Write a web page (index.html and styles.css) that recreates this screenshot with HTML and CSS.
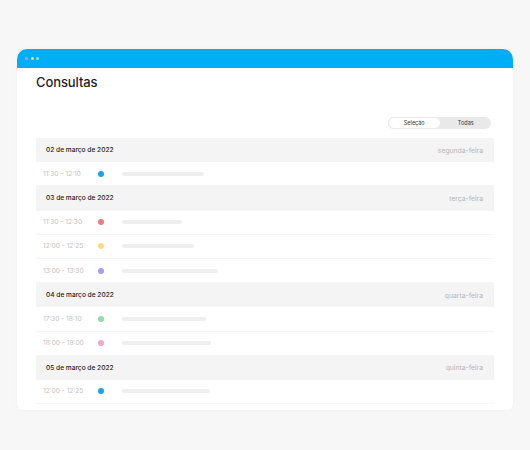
FILE: index.html
```html
<!DOCTYPE html>
<html lang="pt">
<head>
<meta charset="utf-8">
<link rel="stylesheet" href="styles.css">
</head>
<body>
<div class="window">
  <div class="titlebar">
    <span class="wdot d1"></span><span class="wdot d2"></span><span class="wdot d3"></span>
  </div>
  <div class="content">
    <h1 class="title">Consultas</h1>
    <div class="toolbar">
      <div class="toggle">
        <span class="opt active">Seleção</span>
        <span class="opt">Todas</span>
      </div>
    </div>
    <div class="table">
      <div class="day"><span class="date">02 de março de 2022</span><span class="weekday">segunda-feira</span></div>
      <div class="row"><span class="time">11:30 – 12:10</span><span class="dot blue"></span><span class="bar" style="width:82px"></span></div>

      <div class="day"><span class="date">03 de março de 2022</span><span class="weekday">terça-feira</span></div>
      <div class="row"><span class="time">11:30 - 12:30</span><span class="dot red"></span><span class="bar" style="width:60px"></span></div>
      <div class="row"><span class="time">12:00 - 12:25</span><span class="dot yellow"></span><span class="bar" style="width:72px"></span></div>
      <div class="row"><span class="time">13:00 - 13:30</span><span class="dot purple"></span><span class="bar" style="width:96px"></span></div>

      <div class="day"><span class="date">04 de março de 2022</span><span class="weekday">quarta-feira</span></div>
      <div class="row"><span class="time">17:30 - 18:10</span><span class="dot green"></span><span class="bar" style="width:84px"></span></div>
      <div class="row"><span class="time">18:00 - 19:00</span><span class="dot pink"></span><span class="bar" style="width:89px"></span></div>

      <div class="day"><span class="date">05 de março de 2022</span><span class="weekday">quinta-feira</span></div>
      <div class="row last"><span class="time">12:00 - 12:25</span><span class="dot blue"></span><span class="bar" style="width:88px"></span></div>
    </div>
  </div>
</div>
</body>
</html>
```

FILE: styles.css
```css
* { box-sizing: border-box; }
html, body { margin: 0; padding: 0; }
body {
  background: #f7f7f7;
  font-family: Inter, "Noto Sans", sans-serif;
  width: 530px;
  height: 450px;
  overflow: hidden;
}
.window {
  margin: 49px 0 0 17px;
  width: 496px;
  background: #fff;
  border-radius: 10px 10px 6px 6px;
  box-shadow: 0 0 4px rgba(0,0,0,0.03);
  overflow: hidden;
}
.titlebar {
  height: 19px;
  background: #00aef5;
  display: flex;
  align-items: center;
  gap: 2.5px;
  padding-left: 8px;
}
.wdot {
  width: 3px;
  height: 3px;
  border-radius: 50%;
}
.d1 { background: #c58fd6; }
.d2 { background: #e8e06a; }
.d3 { background: #7fe3f0; }
.content {
  padding: 6px 19px 6px 19px;
}
.title {
  margin: 0;
  font-size: 13px;
  font-weight: 500;
  line-height: 16px;
  color: #1f1f1f;
  letter-spacing: -0.1px;
}
.toolbar {
  display: flex;
  justify-content: flex-end;
  margin-top: 27px;
  padding-right: 3px;
}
.toggle {
  display: flex;
  width: 103px;
  height: 12px;
  background: #e9e9e9;
  border-radius: 6px;
}
.opt {
  flex: 1;
  display: flex;
  align-items: center;
  justify-content: center;
  font-size: 5.5px;
  color: #333;
  border-radius: 6px;
}
.opt.active {
  background: #fff;
  border: 1px solid #e9e9e9;
}
.table {
  margin-top: 9px;
}
.day {
  height: 24.2px;
  background: #f4f4f4;
  display: flex;
  align-items: center;
  justify-content: space-between;
  padding: 0 11px 0 10px;
}
.date {
  font-size: 6.6px;
  font-weight: 500;
  color: #222;
}
.weekday {
  font-size: 6.8px;
  color: #b4b4b4;
}
.row {
  height: 24.2px;
  display: flex;
  align-items: center;
  padding-left: 7px;
  border-bottom: 1px solid #f5f5f5;
}
.row.last { border-bottom: 1px solid #f7f7f7; }
.time {
  width: 55px;
  font-size: 6.6px;
  color: #c2c2c2;
}
.dot {
  width: 6px;
  height: 6px;
  border-radius: 50%;
  margin-right: 18px;
}
.blue { background: #1aa1ea; }
.red { background: #ea7d84; }
.yellow { background: #fcd987; }
.purple { background: #aa9cf4; }
.green { background: #93dbab; }
.pink { background: #f5a6c8; }
.bar {
  height: 4px;
  border-radius: 2px;
  background: #efefef;
}
```
